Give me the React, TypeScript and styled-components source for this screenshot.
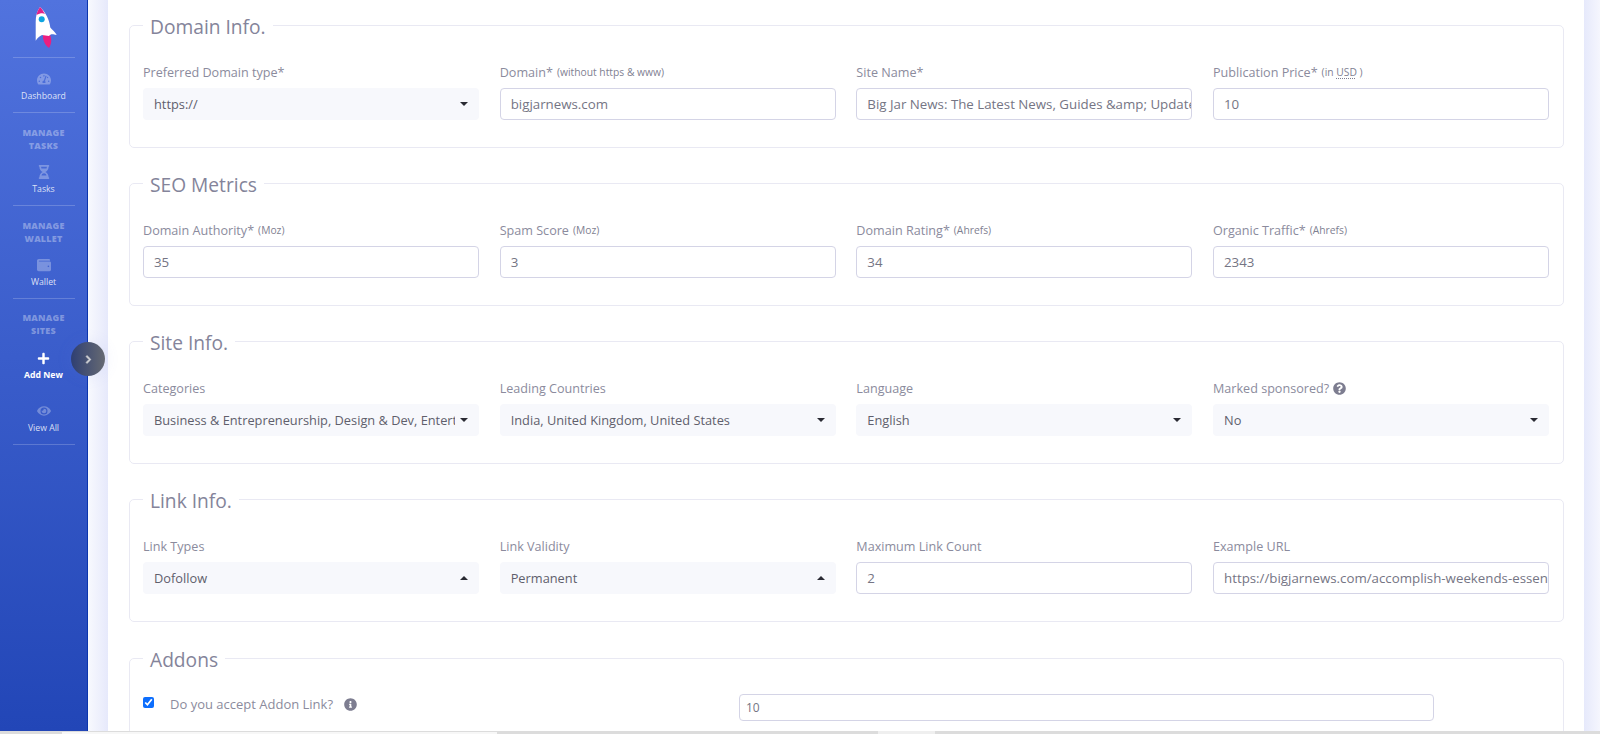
import React from "react";
import styled, { createGlobalStyle } from "styled-components";
import { FaTachometerAlt, FaHourglassHalf, FaWallet, FaPlus, FaEye, FaChevronRight, FaInfoCircle, FaQuestionCircle } from "react-icons/fa";

const Global = createGlobalStyle`
  html, body { margin: 0; padding: 0; height: 734px; overflow: hidden; background: #fff; }
  * { box-sizing: border-box; }
  body { font-family: "Open Sans", "Noto Sans", sans-serif; }
`;

const Shell = styled.div`
  width: 1600px; height: 734px; display: flex; flex-direction: column; overflow: hidden;
`;
const Main = styled.div`
  flex: 1; min-height: 0; display: flex; overflow: hidden;
  background: #f3f5fd;
`;
const StatusStrip = styled.div`
  height: 3px; flex: none; display: flex;
  background: #dcdcdc;
`;
const StripPiece = styled.div<{ $left: number; $w: number; $tone: string; $top?: number }>`
  width: ${p => p.$w}px; margin-left: ${p => p.$left}px; margin-top: ${p => p.$top ?? 0}px; background: ${p => p.$tone};
`;
const Sidebar = styled.nav`
  width: 88px; flex: none; position: relative; display: flex; flex-direction: column; align-items: center;
  background: linear-gradient(180deg, #5173de 0%, #2246b7 100%);
  border-right: 1px solid #0b35ad;
`;
const LogoWrap = styled.div`
  height: 57px; width: 100%; display: flex; justify-content: flex-start; align-items: flex-start; padding: 6px 0 0 34px;
`;
const Divider = styled.div`
  width: 62px; height: 1px; flex: none; background: rgba(255,255,255,.2);
`;
const SectionTitle = styled.div`
  width: 100%; padding-top: 12.5px; text-align: center;
  font-weight: 800; font-size: 9px; line-height: 13px; letter-spacing: .2px;
  color: rgba(255,255,255,.35);
`;
const NavItem = styled.div<{ $active?: boolean; $h: number }>`
  width: 100%; height: ${p => p.$h}px; flex: none; display: flex; flex-direction: column; align-items: center; justify-content: flex-end; padding-bottom: 10px;
  color: ${p => (p.$active ? "#fff" : "rgba(255,255,255,.82)")};
  font-size: 8.7px; line-height: 12px; font-weight: ${p => (p.$active ? 700 : 500)};
  svg { color: ${p => (p.$active ? "#fff" : "rgba(255,255,255,.3)")}; font-size: ${p => (p.$active ? 13 : 14)}px; margin-bottom: 4px; }
`;
const Toggle = styled.div`
  position: absolute; left: 71px; top: 342px; width: 34px; height: 34px; border-radius: 50%;
  display: flex; align-items: center; justify-content: center;
  background: linear-gradient(90deg, #2f3f73 0%, #666a72 100%);
  box-shadow: 0 0 16px rgba(110,120,220,.12);
  color: #d2d3d6; font-size: 9px; padding-left: 1px;
  svg { stroke: currentColor; stroke-width: 40; }
`;
const Gutter = styled.div`
  width: 20px; flex: none; background: linear-gradient(90deg, #f8f9fe 0%, #e6e9fb 100%);
`;
const Card = styled.main`
  width: 1476px; flex: none; background: #fff; padding: 12px 20px 0 21px; display: flex; flex-direction: column; gap: 22.16px;
  overflow: hidden;
`;
const RightGutter = styled.div`
  flex: 1; background: linear-gradient(90deg, #e6e9fb 0%, #f5f6fe 100%);
`;
const Fieldset = styled.fieldset`
  margin: 0; padding: 0 14px 27px 13px; border: 1px solid #e9e9f3; border-radius: 5px; min-width: 0; flex: none;
`;
const Legend = styled.legend`
  margin-left: 0; padding: 0 7px; font-size: 19.2px; line-height: 27px; color: #84849a; font-weight: 400;
  position: relative; top: 1px;
`;
const Row = styled.div`
  display: grid; grid-template-columns: repeat(4, 1fr); column-gap: 20.7px; margin-top: 24px;
`;
const Field = styled.div`
  min-width: 0; display: flex; flex-direction: column;
`;
const Label = styled.div`
  height: 19px; margin-bottom: 6px; font-size: 12.6px; line-height: 19px; color: #8b8b9d; white-space: nowrap; display: flex; align-items: center; gap: 4px;
`;
const Small = styled.small`
  font-size: 10.3px; color: #7f7f92;
`;
const Abbr = styled.span`
  text-decoration: underline dotted; text-underline-offset: 2px;
`;
const Input = styled.div`
  height: 32px; padding: 0 10px; border: 1px solid #d4d4e6; border-radius: 4px; background: #fff;
  font-size: 13.3px; line-height: 30px; color: #757584; white-space: nowrap; overflow: hidden;
`;
const SelectBox = styled.div`
  height: 32px; padding: 0 11px; border-radius: 4px; background: #f7f8fc; display: flex; align-items: center; justify-content: space-between;
  font-size: 12.8px; color: #5f5f6c; gap: 5px;
`;
const SelectText = styled.span`
  white-space: nowrap; overflow: hidden; flex: 1; min-width: 0;
`;
const Caret = styled.span<{ $up?: boolean }>`
  width: 0; height: 0; flex: none; border-left: 4px solid transparent; border-right: 4px solid transparent;
  ${p => (p.$up ? "border-bottom: 4px solid #2a2a33;" : "border-top: 4px solid #2a2a33;")}
`;
const AddonRow = styled.div`
  display: grid; grid-template-columns: 596px 695px; margin-top: 22.5px; align-items: start;
`;
const CheckLabel = styled.label`
  height: 20px; display: flex; align-items: center; font-size: 13px; color: #8b8b9d;
  svg { color: #7d7d90; font-size: 13px; margin-left: 11px; }
`;
const Check = styled.input`
  width: 11px; height: 11px; margin: -4px 16px 0 0; accent-color: #0d6efd;
`;
const AddonInput = styled(Input)`
  height: 27px; line-height: 26px; font-size: 12px; padding: 0 6px;
`;

const Rocket = () => (
  <svg width="24" height="44" viewBox="0 0 24 44">
    <path d="M9 29 C8.5 34 11 39 15 42 C17.5 38 18 33 16 29 Z" fill="#ec1f7f" />
    <path d="M6 1 C3 5 1.7 10 1.7 16 L1.7 34.7 C3.5 32 5.5 30 8 29 L15 30 C16.5 28 18 27.5 22.7 29 C21.5 26 18 24 16.3 21.5 C15.5 14 11.5 6 6 1 Z" fill="#fff" />
    <path d="M6 1 C3.8 4 3 6.5 2.5 9 C6 7 9 6.8 11 8 C9.5 5.5 8 3 6 1 Z" fill="#e0218a" />
    <circle cx="7.7" cy="13.3" r="3" fill="#0ea5e0" />
  </svg>
);

type F = { label: string; small?: React.ReactNode; value: string; select?: boolean; up?: boolean; help?: boolean };

const sections: { title: string; fields: F[] }[] = [
  { title: "Domain Info.", fields: [
    { label: "Preferred Domain type*", value: "https://", select: true },
    { label: "Domain*", small: "(without https & www)", value: "bigjarnews.com" },
    { label: "Site Name*", value: "Big Jar News: The Latest News, Guides &amp; Updates" },
    { label: "Publication Price*", small: <>(in <Abbr>USD</Abbr> )</>, value: "10" },
  ]},
  { title: "SEO Metrics", fields: [
    { label: "Domain Authority*", small: "(Moz)", value: "35" },
    { label: "Spam Score", small: "(Moz)", value: "3" },
    { label: "Domain Rating*", small: "(Ahrefs)", value: "34" },
    { label: "Organic Traffic*", small: "(Ahrefs)", value: "2343" },
  ]},
  { title: "Site Info.", fields: [
    { label: "Categories", value: "Business & Entrepreneurship, Design & Dev, Entertainment", select: true },
    { label: "Leading Countries", value: "India, United Kingdom, United States", select: true },
    { label: "Language", value: "English", select: true },
    { label: "Marked sponsored?", value: "No", select: true, help: true },
  ]},
  { title: "Link Info.", fields: [
    { label: "Link Types", value: "Dofollow", select: true, up: true },
    { label: "Link Validity", value: "Permanent", select: true, up: true },
    { label: "Maximum Link Count", value: "2" },
    { label: "Example URL", value: "https://bigjarnews.com/accomplish-weekends-essentials" },
  ]},
];

export default function App() {
  return (
    <Shell>
      <Global />
      <Main>
        <Sidebar>
          <LogoWrap><Rocket /></LogoWrap>
          <Divider />
          <NavItem $h={54}><FaTachometerAlt />Dashboard</NavItem>
          <Divider />
          <SectionTitle>MANAGE<br />TASKS</SectionTitle>
          <NavItem $h={53.5}><FaHourglassHalf />Tasks</NavItem>
          <Divider />
          <SectionTitle>MANAGE<br />WALLET</SectionTitle>
          <NavItem $h={53}><FaWallet />Wallet</NavItem>
          <Divider />
          <SectionTitle>MANAGE<br />SITES</SectionTitle>
          <NavItem $h={54} $active><FaPlus />Add New</NavItem>
          <NavItem $h={53}><FaEye />View All</NavItem>
          <Divider />
          <Toggle><FaChevronRight /></Toggle>
        </Sidebar>
        <Gutter />
        <Card>
          {sections.map(s => (
            <Fieldset key={s.title}>
              <Legend>{s.title}</Legend>
              <Row>
                {s.fields.map(f => (
                  <Field key={f.label}>
                    <Label>
                      {f.label}
                      {f.small && <Small>{f.small}</Small>}
                      {f.help && <FaQuestionCircle color="#7d7d90" size={13} />}
                    </Label>
                    {f.select ? (
                      <SelectBox><SelectText>{f.value}</SelectText><Caret $up={f.up} /></SelectBox>
                    ) : (
                      <Input>{f.value}</Input>
                    )}
                  </Field>
                ))}
              </Row>
            </Fieldset>
          ))}
          <Fieldset>
            <Legend>Addons</Legend>
            <AddonRow>
              <CheckLabel><Check type="checkbox" defaultChecked />Do you accept Addon Link?<FaInfoCircle /></CheckLabel>
              <AddonInput>10</AddonInput>
            </AddonRow>
          </Fieldset>
        </Card>
        <RightGutter />
      </Main>
      <StatusStrip>
        <StripPiece $left={62} $w={435} $tone="#f7f7f7" $top={1} />
        <StripPiece $left={381} $w={57} $tone="#efefef" />
      </StatusStrip>
    </Shell>
  );
}
